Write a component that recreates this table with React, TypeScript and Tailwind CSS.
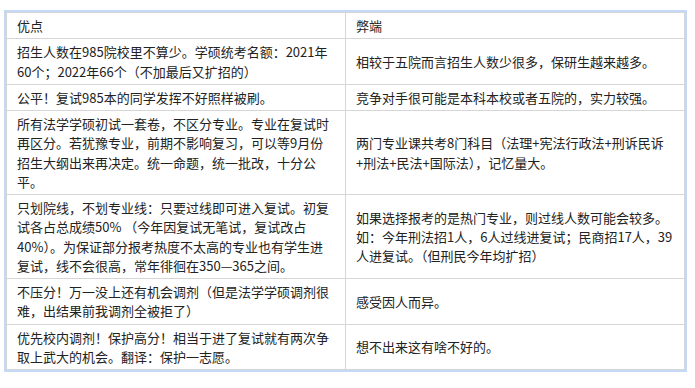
const rows: { pros: string[]; cons: string[] }[] = [
  {
    pros: ["招生人数在985院校里不算少。学硕统考名额：2021年", "60个；2022年66个（不加最后又扩招的）"],
    cons: ["相较于五院而言招生人数少很多，保研生越来越多。"],
  },
  {
    pros: ["公平！复试985本的同学发挥不好照样被刷。"],
    cons: ["竞争对手很可能是本科本校或者五院的，实力较强。"],
  },
  {
    pros: [
      "所有法学学硕初试一套卷，不区分专业。专业在复试时",
      "再区分。若犹豫专业，前期不影响复习，可以等9月份",
      "招生大纲出来再决定。统一命题，统一批改，十分公",
      "平。",
    ],
    cons: ["两门专业课共考8门科目（法理+宪法行政法+刑诉民诉", "+刑法+民法+国际法），记忆量大。"],
  },
  {
    pros: [
      "只划院线，不划专业线：只要过线即可进入复试。初复",
      "试各占总成绩50% （今年因复试无笔试，复试改占",
      "40%）。为保证部分报考热度不太高的专业也有学生进",
      "复试，线不会很高，常年徘徊在350—365之间。",
    ],
    cons: [
      "如果选择报考的是热门专业，则过线人数可能会较多。",
      "如：今年刑法招1人，6人过线进复试；民商招17人，39",
      "人进复试。（但刑民今年均扩招）",
    ],
  },
  {
    pros: ["不压分！万一没上还有机会调剂（但是法学学硕调剂很", "难，出结果前我调剂全被拒了）"],
    cons: ["感受因人而异。"],
  },
  {
    pros: ["优先校内调剂！保护高分！相当于进了复试就有两次争", "取上武大的机会。翻译：保护一志愿。"],
    cons: ["想不出来这有啥不好的。"],
  },
];

function Lines({ lines }: { lines: string[] }) {
  return (
    <>
      {lines.map((l, i) => (
        <div key={i} className="whitespace-nowrap">
          {l}
        </div>
      ))}
    </>
  );
}

export default function App() {
  return (
    <div
      className="w-[695px] h-[388px] bg-white pt-[10px] pl-[4px] text-[13px] leading-[19.25px] text-[#222222]"
      style={{ fontFamily: '"Microsoft YaHei", "Noto Sans CJK SC", "Noto Sans", sans-serif' }}
    >
      <div className="w-[683px] border-2 border-[#c4d9f6]">
        <table className="w-full border-collapse table-fixed">
          <thead>
            <tr>
              <th className="w-1/2 border border-[#d6d6d6] px-[10px] py-[3px] text-left font-normal align-top">优点</th>
              <th className="w-1/2 border border-[#d6d6d6] px-[10px] py-[3px] text-left font-normal align-top">弊端</th>
            </tr>
          </thead>
          <tbody>
            {rows.map((r, i) => (
              <tr key={i}>
                <td className="border border-[#d6d6d6] px-[10px] py-[3px] align-top">
                  <Lines lines={r.pros} />
                </td>
                <td className="border border-[#d6d6d6] px-[10px] py-[3px] align-middle">
                  <Lines lines={r.cons} />
                </td>
              </tr>
            ))}
          </tbody>
        </table>
      </div>
    </div>
  );
}
